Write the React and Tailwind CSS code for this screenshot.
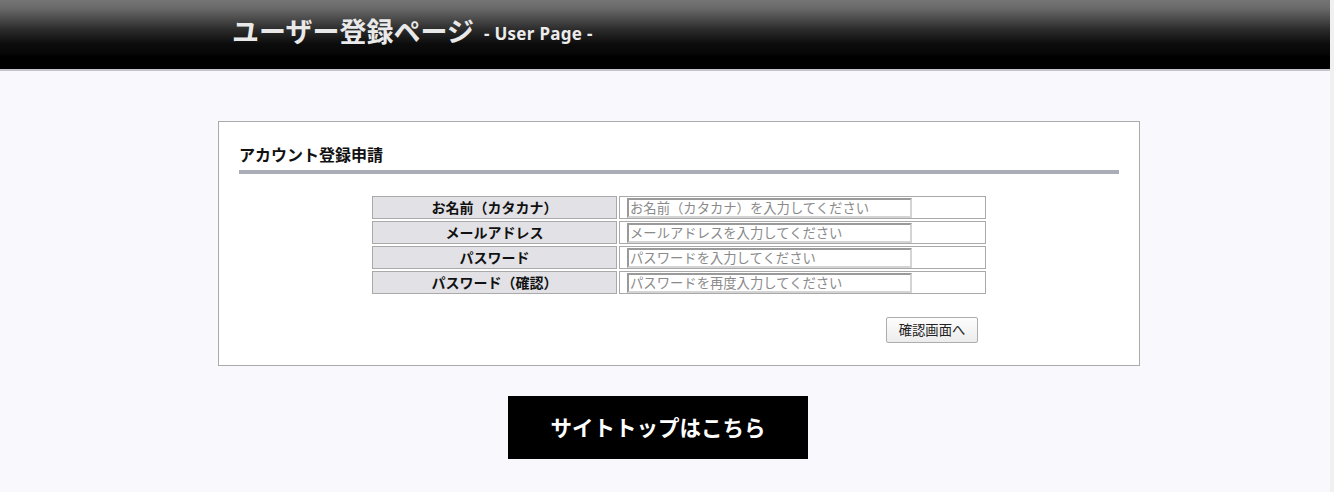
import React from "react";

const jp = { fontFamily: '"Noto Sans CJK JP", "Noto Sans", sans-serif' };

const rows = [
  ["お名前（カタカナ）", "お名前（カタカナ）を入力してください"],
  ["メールアドレス", "メールアドレスを入力してください"],
  ["パスワード", "パスワードを入力してください"],
  ["パスワード（確認）", "パスワードを再度入力してください"],
];

export default function App() {
  return (
    <div className="flex w-[1334px] min-h-[492px] bg-[#f0f0f0]" style={jp}>
      <div className="w-[1330px] min-h-[492px] bg-[#f8f8fd] flex flex-col">
        <header className="h-[71px] border-b-2 border-[#c4c4cc] bg-[linear-gradient(180deg,#747474_0px,#6a6a6a_8px,#2a2a2a_30px,#0c0c0c_44px,#080808_52px,#000000_57px)] flex items-center pl-[232px] pb-[8px]">
          <span className="text-[27px] font-bold text-[#e9e9e9] tracking-[0px] leading-none">ユーザー登録ページ</span>
          <span className="ml-[10px] mt-[6px] text-[17px] font-bold text-[#ececec] leading-none tracking-[0.3px]" style={{ fontFamily: '"Noto Sans", sans-serif' }}>- User Page -</span>
        </header>

        <div className="ml-[218px] mt-[50px] w-[922px] h-[245px] bg-white border border-[#aaaaaa] px-[20px] pt-[20px]">
          <h2 className="text-[16px] font-bold text-[#111] leading-[20px] h-[28px] pt-[2px]">アカウント登録申請</h2>
          <div className="h-[4px] bg-[#abadb6]" />
          <div className="mt-[22px] flex flex-col items-center gap-[2px]">
            {rows.map(([label, ph]) => (
              <div key={label} className="flex gap-[2px]">
                <div className="w-[245px] h-[23px] border border-[#a9a9a9] bg-[#e1e1e6] flex items-center justify-center text-[14px] font-bold text-[#111]">
                  {label}
                </div>
                <div className="w-[367px] h-[23px] border border-[#a9a9a9] bg-white flex items-center pl-[7px]">
                  <input
                    placeholder={ph}
                    className="w-[285px] h-[20px] border-2 border-t-[#9a9a9a] border-l-[#9a9a9a] border-r-[#d4d4d4] border-b-[#d4d4d4] bg-white px-[1px] text-[13.33px] text-[#333] placeholder:text-[#8a8a8a] outline-none"
                    style={jp}
                  />
                </div>
              </div>
            ))}
          </div>
          <div className="flex justify-end mt-[23px] pr-[141px]">
            <button className="w-[92px] h-[26px] border border-[#adadad] rounded-[2px] bg-[linear-gradient(180deg,#fdfdfd,#ececec)] text-[13.33px] text-[#222] leading-none" style={jp}>
              確認画面へ
            </button>
          </div>
        </div>

        <div className="ml-[508px] mt-[30px] w-[300px] h-[63px] bg-black flex items-center justify-center">
          <span className="text-[21.5px] font-bold text-white">サイトトップはこちら</span>
        </div>
      </div>
    </div>
  );
}
